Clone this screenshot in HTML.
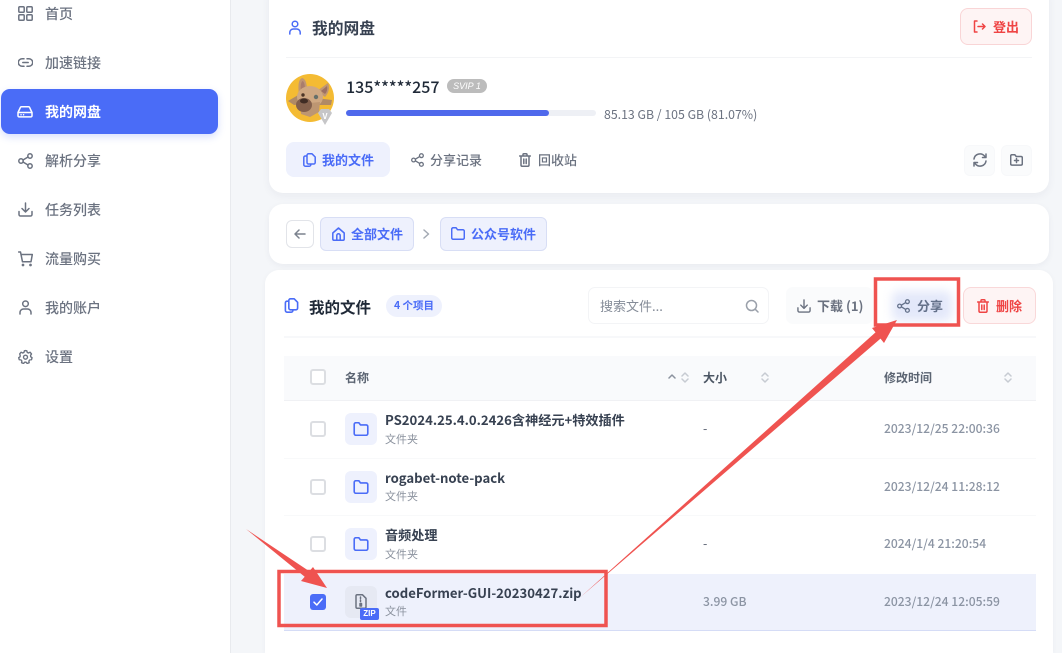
<!DOCTYPE html>
<html><head><meta charset="utf-8"><style>
*{box-sizing:border-box}
html,body{margin:0;padding:0;width:1062px;height:653px;overflow:hidden;background:#f4f6f9}
#root{position:absolute;left:0;top:0;width:1062px;height:653px;overflow:hidden;background:#f4f6f9;font-family:"Noto Sans CJK SC","Liberation Sans",sans-serif;color:#1f2937}
#in{position:absolute;left:0;top:0;width:1062px;height:653px;filter:blur(.35px)}
.a{position:absolute}
.t{position:absolute;white-space:nowrap;line-height:20px}
svg.i{position:absolute;fill:none;stroke:currentColor;stroke-width:1.5;stroke-linecap:round;stroke-linejoin:round}
.nav{position:absolute;left:45px;font-size:14px;color:#6b7280;white-space:nowrap;line-height:20px;font-weight:500}
.card{position:absolute;background:#fff;border-radius:14px}
.cb{position:absolute;left:310px;width:16px;height:16px;border:2px solid #dcdee2;border-radius:3px;background:#fff}
.fi{position:absolute;left:345px;width:32px;height:32px;border-radius:6px;background:#eef1fd;color:#4a6cf7}
.name{position:absolute;left:385px;font-size:13.15px;font-weight:700;color:#374151;white-space:nowrap;line-height:18px}
.sub{position:absolute;left:385px;font-size:11px;color:#8b929e;white-space:nowrap;line-height:16px}
.date{position:absolute;left:884px;font-size:12.1px;font-weight:500;color:#8b94a3;white-space:nowrap;line-height:18px}
.th{position:absolute;font-size:12px;font-weight:700;color:#5b6472;white-space:nowrap;line-height:18px}
</style></head><body>
<div id="root"><div id="in">

<!-- sidebar -->
<div class="a" style="left:0;top:0;width:231px;height:653px;background:#fff;border-right:1px solid #e8eaee"></div>
<div class="a" style="left:1px;top:89px;width:217px;height:45px;background:#4a6cf7;border-radius:9px;box-shadow:0 3px 8px rgba(74,108,247,.22)"></div>

<svg class="i" style="left:18px;top:6px;color:#6b7280" width="15" height="15" viewBox="0 0 15 15"><rect x=".8" y=".8" width="5.4" height="5.4" rx="1"/><rect x="8.8" y=".8" width="5.4" height="5.4" rx="1"/><rect x=".8" y="8.8" width="5.4" height="5.4" rx="1"/><rect x="8.8" y="8.8" width="5.4" height="5.4" rx="1"/></svg>
<div class="nav" style="top:4px">首页</div>
<svg class="i" style="left:18px;top:55px;color:#6b7280" width="15" height="15" viewBox="0 0 15 15"><path d="M6 3.8H4a3.7 3.7 0 0 0 0 7.4h2M9 3.8h2a3.7 3.7 0 0 1 0 7.4H9M4.8 7.5h5.4"/></svg>
<div class="nav" style="top:53px">加速链接</div>
<svg class="i" style="left:17px;top:104px;color:#fff" width="16" height="16" viewBox="0 0 16 16"><path d="M1 8.5 3.4 3.4a1.2 1.2 0 0 1 1-.6h7.2a1.2 1.2 0 0 1 1 .6L15 8.5v3.2a1.2 1.2 0 0 1-1.2 1.2H2.2a1.2 1.2 0 0 1-1.2-1.2zM1 8.500h14M4 10.800h.1M6.500 10.800h.1"/></svg>
<div class="nav" style="top:102px;color:#fff;font-weight:700">我的网盘</div>
<svg class="i" style="left:18px;top:153px;color:#6b7280" width="15" height="16" viewBox="0 0 15 16"><circle cx="3" cy="8" r="2.2"/><circle cx="12" cy="3" r="2.2"/><circle cx="12" cy="13" r="2.2"/><path d="M5 7 10 4M5 9l5 3"/></svg>
<div class="nav" style="top:151px">解析分享</div>
<svg class="i" style="left:18px;top:202px;color:#6b7280" width="15" height="15" viewBox="0 0 15 15"><path d="M1 9.500v3a1.500 1.500 0 0 0 1.500 1.500h10a1.500 1.500 0 0 0 1.500-1.500v-3M7.500 1v8.800M4 6.500l3.500 3.500L11 6.500"/></svg>
<div class="nav" style="top:200px">任务列表</div>
<svg class="i" style="left:18px;top:251px;color:#6b7280" width="15" height="16" viewBox="0 0 15 16"><path d="M.7 1h1.800l2 9.800h8.500L14.300 3.500H3"/><circle cx="5" cy="14" r=".6"/><circle cx="12.500" cy="14" r=".6"/></svg>
<div class="nav" style="top:249px">流量购买</div>
<svg class="i" style="left:19px;top:300px;color:#6b7280" width="13" height="15" viewBox="0 0 13 15"><circle cx="6.500" cy="3.800" r="2.800"/><path d="M1 14v-1.500A3.500 3.500 0 0 1 4.500 9h4a3.500 3.500 0 0 1 3.500 3.500V14"/></svg>
<div class="nav" style="top:298px">我的账户</div>
<svg class="i" style="left:18px;top:349px;color:#6b7280" width="15" height="15" viewBox="0 0 24 24"><path stroke-width="2.200" d="M12 2.500l2 .3.800 2.700 2 .9 2.500-1.300 2.300 2.800-1.500 2.300.2 2.200 2.200 1.500-.9 3.300-2.800.2-1.400 1.800.5 2.700-3.300 1.300-1.700-2.200h-2.200l-1.700 2.200-3.300-1.300.5-2.700-1.400-1.800-2.800-.2-.9-3.300 2.200-1.500.2-2.200L2.700 7.900 5 5.100l2.500 1.300 2-.9.800-2.700z"/><circle cx="12" cy="13" r="3.200" stroke-width="2.200"/></svg>
<div class="nav" style="top:347px">设置</div>

<!-- card 1 -->
<div class="card" style="left:269px;top:-20px;width:780px;height:213px;box-shadow:0 3px 9px rgba(30,40,70,.05)"></div>
<svg class="i" style="left:289px;top:20px;color:#4a6cf7" width="12" height="15" viewBox="0 0 12 15"><circle cx="6" cy="4" r="2.800"/><path d="M.8 14v-1.500A3.500 3.500 0 0 1 4.300 9h3.400a3.500 3.500 0 0 1 3.500 3.500V14"/></svg>
<div class="t" style="left:312px;top:18px;font-size:15.75px;font-weight:700;color:#374151">我的网盘</div>
<div class="a" style="left:286px;top:57px;width:746px;height:1px;background:#f3f4f6"></div>
<div class="a" style="left:960px;top:8px;width:72px;height:37px;background:#fef4f4;border:1px solid #f9d5d6;border-radius:8px"></div>
<svg class="i" style="left:973px;top:20px;color:#ef4444" width="13" height="13" viewBox="0 0 13 13" stroke-width="1.200"><path d="M4 1H1.500v11H4M5 6.500h7M9.500 4l2.500 2.500L9.500 9"/></svg>
<div class="t" style="left:993px;top:17px;font-size:13px;font-weight:700;color:#ef4444">登出</div>

<!-- avatar -->
<svg class="a" style="left:286px;top:74px" width="50" height="52" viewBox="0 0 50 52">
<circle cx="24" cy="24" r="24" fill="#f4bb33"/>
<path d="M2 27 14 20 20 30 8 31z" fill="#b08a66"/>
<path d="M30 24 46 26 45 31 32 31z" fill="#b08a66"/>
<path d="M13 21q-2-15 3-17 5 1 5 13z" fill="#c09673"/>
<path d="M15 18q-1-9 1.500-11 2.500 1 2.500 9z" fill="#a97d6c"/>
<path d="M31 17 42 9q3 7-3 14z" fill="#c09673"/>
<path d="M35 17 41 12q1 5-2 8z" fill="#9c7064"/>
<ellipse cx="24" cy="23" rx="13" ry="11" fill="#cfa882"/>
<path d="M14 30 34 28 33 38 24 43 15 40z" fill="#bd9672"/>
<ellipse cx="18" cy="31" rx="8" ry="7" fill="#83604c"/>
<ellipse cx="18" cy="27" rx="4" ry="2.500" fill="#3f2c24"/>
<circle cx="17" cy="21" r="1.700" fill="#4c3526"/><circle cx="30" cy="23" r="2.200" fill="#67706a"/>
<path d="M35 35h8l3 4-7 12-7-12z" fill="#c6c6c8"/>
<text x="39" y="45" font-size="8" font-weight="700" text-anchor="middle" fill="#fff" font-family="Noto Sans CJK SC,sans-serif">V</text>
</svg>
<div class="t" style="left:346px;top:76px;font-size:16px;font-weight:500;color:#1f2937">135*****257</div>
<div class="a" style="left:447px;top:79px;width:40px;height:14px;border-radius:7px;background:#bcbcbc;color:#fff;font:italic 9px/14px 'Liberation Sans',sans-serif;text-align:center">SVIP 1</div>
<div class="a" style="left:346px;top:110px;width:250px;height:6px;border-radius:3px;background:#eef0f5"></div>
<div class="a" style="left:346px;top:110px;width:203px;height:6px;border-radius:3px;background:#4f69ec"></div>
<div class="t" style="left:604px;top:104px;font-size:12.3px;color:#6b7280">85.13 GB / 105 GB (81.07%)</div>

<div class="a" style="left:286px;top:142px;width:104px;height:35px;border-radius:8px;background:#eef1fd"></div>
<svg class="i" style="left:303px;top:153px;color:#4a6cf7" width="13" height="14" viewBox="0 0 13 14" stroke-width="1.200"><path d="M4 3H2.300A1.500 1.500 0 0 0 .8 4.500v7.200A1.500 1.500 0 0 0 2.300 13.200h4A1.500 1.500 0 0 0 7.800 11.700V11M4 2.300A1.500 1.500 0 0 1 5.500.8H9L12.200 4v5.500A1.500 1.500 0 0 1 10.700 11H5.500A1.500 1.500 0 0 1 4 9.500z"/></svg>
<div class="t" style="left:322px;top:150px;font-size:13px;font-weight:700;color:#4a6cf7">我的文件</div>
<svg class="i" style="left:411px;top:153px;color:#6b7280" width="13" height="14" viewBox="0 0 15 16"><circle cx="3" cy="8" r="2.2"/><circle cx="12" cy="3" r="2.2"/><circle cx="12" cy="13" r="2.2"/><path d="M5 7 10 4M5 9l5 3"/></svg>
<div class="t" style="left:430px;top:150px;font-size:13px;font-weight:500;color:#6b7280">分享记录</div>
<svg class="i" style="left:519px;top:153px;color:#6b7280" width="12" height="14" viewBox="0 0 12 14" stroke-width="1.100"><path d="M.7 3h10.600M4 3V1.500A.8.8 0 0 1 4.800.8h2.400a.8.8 0 0 1 .8.700V3M2 3v9a1.300 1.300 0 0 0 1.300 1.300h5.400A1.300 1.300 0 0 0 10 12V3M4.800 6v4.500M7.200 6v4.500"/></svg>
<div class="t" style="left:538px;top:150px;font-size:13px;font-weight:500;color:#6b7280">回收站</div>

<div class="a" style="left:964px;top:145px;width:31px;height:31px;border-radius:6px;background:#fafbfc;border:1px solid #f7f8fa"></div>
<div class="a" style="left:1001px;top:145px;width:31px;height:31px;border-radius:6px;background:#fafbfc;border:1px solid #f7f8fa"></div>
<svg class="i" style="left:973px;top:153px;color:#6b7280" width="14" height="14" viewBox="0 0 14 14" stroke-width="1.100"><path d="M1 6A6 6 0 0 1 11.500 3L13 4.500M13 1v3.500H9.500M13 8A6 6 0 0 1 2.500 11L1 9.500M1 13V9.500h3.500"/></svg>
<svg class="i" style="left:1010px;top:154px;color:#6b7280" width="13" height="12" viewBox="0 0 13 12" stroke-width="1.100"><path d="M.7 2A1.300 1.300 0 0 1 2 .7h2.800l1.400 1.800h4.800A1.300 1.300 0 0 1 12.300 3.800v6A1.300 1.300 0 0 1 11 11.100H2A1.300 1.300 0 0 1 .7 9.800zM6.500 4.500v4M4.500 6.500h4"/></svg>

<!-- card 2 -->
<div class="card" style="left:269px;top:204px;width:780px;height:60px;box-shadow:0 2px 7px rgba(30,40,70,.05)"></div>
<div class="a" style="left:286px;top:220px;width:28px;height:28px;border-radius:6px;border:1px solid #e2e4e9;background:#fff"></div>
<svg class="i" style="left:294px;top:228px;color:#7b828e" width="12" height="12" viewBox="0 0 12 12" stroke-width="1.100"><path d="M11 6H1.200M5 2 1 6l4 4"/></svg>
<div class="a" style="left:320px;top:217px;width:94px;height:34px;border-radius:6px;background:#eef1fd;border:1px solid #d8def5"></div>
<svg class="i" style="left:332px;top:227px;color:#4a6cf7" width="13" height="14" viewBox="0 0 13 14" stroke-width="1.100"><path d="M.8 6 6.500 1l5.700 5v6a1.300 1.300 0 0 1-1.300 1.300H2.100A1.300 1.300 0 0 1 .8 12zM4.800 13V8.500a1.700 1.700 0 0 1 3.400 0V13"/></svg>
<div class="t" style="left:351px;top:224px;font-size:13px;font-weight:700;color:#4a6cf7">全部文件</div>
<svg class="i" style="left:423px;top:229px;color:#a3a9b3" width="7" height="10" viewBox="0 0 7 10" stroke-width="1.100"><path d="M1 1l4.500 4L1 9"/></svg>
<div class="a" style="left:440px;top:217px;width:107px;height:34px;border-radius:6px;background:#eef1fd;border:1px solid #d8def5"></div>
<svg class="i" style="left:451px;top:227px;color:#4a6cf7" width="14" height="13" viewBox="0 0 14 13" stroke-width="1.100"><path d="M.7 2.200A1.500 1.500 0 0 1 2.200.7h2.800L6.500 2.700h5.300a1.500 1.500 0 0 1 1.500 1.500v6.600a1.500 1.500 0 0 1-1.500 1.500H2.200a1.500 1.500 0 0 1-1.500-1.500z"/></svg>
<div class="t" style="left:471px;top:224px;font-size:13px;font-weight:700;color:#4a6cf7">公众号软件</div>

<!-- card 3 -->
<div class="card" style="left:265px;top:270px;width:788px;height:383px;border-radius:14px 14px 0 0;box-shadow:0 1px 6px rgba(30,40,70,.04)"></div>
<svg class="i" style="left:284px;top:298px;color:#4a6cf7" width="15" height="15" viewBox="0 0 13 14" stroke-width="1.100"><path d="M4 3H2.300A1.500 1.500 0 0 0 .8 4.500v7.200A1.500 1.500 0 0 0 2.300 13.200h4A1.500 1.500 0 0 0 7.800 11.700V11M4 2.300A1.500 1.500 0 0 1 5.500.8H9L12.200 4v5.500A1.500 1.500 0 0 1 10.700 11H5.500A1.500 1.500 0 0 1 4 9.500z"/></svg>
<div class="t" style="left:309px;top:297px;font-size:15.5px;font-weight:700;color:#1f2937">我的文件</div>
<div class="a" style="left:386px;top:295px;width:56px;height:22px;border-radius:11px;background:#eef1fd;color:#4a6cf7;font-size:10.5px;font-weight:700;line-height:22px;text-align:center">4 个项目</div>
<div class="a" style="left:588px;top:287px;width:181px;height:37px;border-radius:7px;border:1px solid #f3f4f6;background:#fff"></div>
<div class="t" style="left:600px;top:296px;font-size:13px;color:#858c98">搜索文件...</div>
<svg class="i" style="left:745px;top:299px;color:#9aa0aa" width="14" height="14" viewBox="0 0 14 14" stroke-width="1"><circle cx="6.500" cy="6.500" r="5"/><path d="M10.300 10.300 13 13"/></svg>
<div class="a" style="left:786px;top:287px;width:87px;height:37px;border-radius:7px;background:#fafbfc"></div>
<svg class="i" style="left:797px;top:299px;color:#6b7280" width="14" height="14" viewBox="0 0 15 15" stroke-width="1.200"><path d="M1 9.500v3a1.500 1.500 0 0 0 1.500 1.500h10a1.500 1.500 0 0 0 1.500-1.500v-3M7.500 1v8.800M4 6.500l3.500 3.500L11 6.500"/></svg>
<div class="t" style="left:817px;top:296px;font-size:13px;font-weight:700;color:#6b7280">下载 (1)</div>
<div class="a" style="left:892px;top:291px;width:60px;height:30px;border-radius:7px;background:#e3e8fa;filter:blur(5px)"></div>
<svg class="i" style="left:897px;top:299px;color:#64718a" width="13" height="14" viewBox="0 0 15 16"><circle cx="3" cy="8" r="2.2"/><circle cx="12" cy="3" r="2.2"/><circle cx="12" cy="13" r="2.2"/><path d="M5 7 10 4M5 9l5 3"/></svg>
<div class="t" style="left:917px;top:296px;font-size:13px;font-weight:700;color:#64718a">分享</div>
<div class="a" style="left:963px;top:287px;width:73px;height:37px;border-radius:8px;background:#fef4f4;border:1px solid #f9d8d9"></div>
<svg class="i" style="left:977px;top:299px;color:#ef4444" width="12" height="14" viewBox="0 0 12 14" stroke-width="1.100"><path d="M.7 3h10.600M4 3V1.500A.8.8 0 0 1 4.800.8h2.400a.8.8 0 0 1 .8.700V3M2 3v9a1.300 1.300 0 0 0 1.300 1.300h5.400A1.300 1.300 0 0 0 10 12V3M4.800 6v4.500M7.200 6v4.500"/></svg>
<div class="t" style="left:996px;top:296px;font-size:13px;font-weight:700;color:#ef4444">删除</div>
<div class="a" style="left:284px;top:336px;width:752px;height:2px;background:#f7f8fa"></div>

<!-- table -->
<div class="a" style="left:284px;top:356px;width:752px;height:45px;background:#f9fafc;border-bottom:1px solid #f0f1f4"></div>
<div class="cb" style="top:369px"></div>
<div class="th" style="left:345px;top:369px">名称</div>
<div class="th" style="left:703px;top:369px;color:#4b5563">大小</div>
<div class="th" style="left:884px;top:369px">修改时间</div>
<svg class="i" style="left:668px;top:373px;color:#8b929e" width="8" height="6" viewBox="0 0 8 6" stroke-width="1"><path d="M1 5l3-3 3 3"/></svg>
<svg class="i" style="left:681px;top:372px;color:#c7cbd2" width="8" height="11" viewBox="0 0 8 11" stroke-width="1"><path d="M1 4l3-3 3 3M1 7l3 3 3-3"/></svg>
<svg class="i" style="left:761px;top:372px;color:#c7cbd2" width="8" height="11" viewBox="0 0 8 11" stroke-width="1"><path d="M1 4l3-3 3 3M1 7l3 3 3-3"/></svg>
<svg class="i" style="left:1004px;top:372px;color:#c7cbd2" width="8" height="11" viewBox="0 0 8 11" stroke-width="1"><path d="M1 4l3-3 3 3M1 7l3 3 3-3"/></svg>

<!-- rows -->
<div class="cb" style="top:421px"></div>
<div class="fi" style="top:413px"></div>
<svg class="i" style="left:353px;top:422px;color:#4a6cf7" width="16" height="14" viewBox="0 0 14 13" stroke-width="1.100"><path d="M.7 2.200A1.500 1.500 0 0 1 2.200.7h2.800L6.500 2.700h5.300a1.500 1.500 0 0 1 1.500 1.500v6.600a1.500 1.500 0 0 1-1.500 1.500H2.200a1.500 1.500 0 0 1-1.500-1.500z"/></svg>
<div class="name" style="top:411px">PS2024.25.4.0.2426含神经元+特效插件</div>
<div class="sub" style="top:431px">文件夹</div>
<div class="date" style="left:703px;top:420px;color:#6b7280">-</div>
<div class="date" style="top:420px">2023/12/25 22:00:36</div>
<div class="a" style="left:284px;top:458px;width:752px;height:1px;background:#f8f9fa"></div>

<div class="cb" style="top:479px"></div>
<div class="fi" style="top:471px"></div>
<svg class="i" style="left:353px;top:480px;color:#4a6cf7" width="16" height="14" viewBox="0 0 14 13" stroke-width="1.100"><path d="M.7 2.200A1.500 1.500 0 0 1 2.200.7h2.800L6.500 2.700h5.300a1.500 1.500 0 0 1 1.500 1.500v6.600a1.500 1.500 0 0 1-1.500 1.500H2.200a1.500 1.500 0 0 1-1.500-1.500z"/></svg>
<div class="name" style="top:469px">rogabet-note-pack</div>
<div class="sub" style="top:488px">文件夹</div>
<div class="date" style="left:703px;top:478px;color:#6b7280">-</div>
<div class="date" style="top:478px">2023/12/24 11:28:12</div>
<div class="a" style="left:284px;top:515px;width:752px;height:1px;background:#f8f9fa"></div>

<div class="cb" style="top:536px"></div>
<div class="fi" style="top:528px"></div>
<svg class="i" style="left:353px;top:537px;color:#4a6cf7" width="16" height="14" viewBox="0 0 14 13" stroke-width="1.100"><path d="M.7 2.200A1.500 1.500 0 0 1 2.200.7h2.800L6.500 2.700h5.300a1.500 1.500 0 0 1 1.500 1.500v6.600a1.500 1.500 0 0 1-1.500 1.500H2.200a1.500 1.500 0 0 1-1.500-1.500z"/></svg>
<div class="name" style="top:526px">音频处理</div>
<div class="sub" style="top:546px">文件夹</div>
<div class="date" style="left:703px;top:535px;color:#6b7280">-</div>
<div class="date" style="top:535px">2024/1/4 21:20:54</div>

<div class="a" style="left:284px;top:574px;width:752px;height:57px;background:#eef1fc;border-bottom:1.5px solid #d5dcf6"></div>
<div class="a" style="left:310px;top:594px;width:16px;height:16px;border-radius:3px;background:#4a6cf7"></div>
<svg class="i" style="left:312px;top:596px;color:#fff" width="12" height="12" viewBox="0 0 12 12" stroke-width="2"><path d="M2 6.200 4.800 9 10 3"/></svg>
<div class="a" style="left:345px;top:586px;width:32px;height:32px;border-radius:6px;background:#e6e9f3"></div>
<svg class="i" style="left:355px;top:594px;color:#6b7280" width="12" height="15" viewBox="0 0 12 15" stroke-width="1"><path d="M1 2A1.200 1.200 0 0 1 2.200.8H7.500L11 4.300V13a1.200 1.200 0 0 1-1.200 1.200H2.200A1.200 1.200 0 0 1 1 13zM5.500 3v1.500M5.500 6v1.500M5 9.500h1.500V12H5z"/></svg>
<div class="a" style="left:360px;top:608px;width:19px;height:12px;border-radius:2px;background:#4a6cf7;color:#fff;font-size:8px;font-weight:700;line-height:12px;text-align:center;font-family:'Liberation Sans',sans-serif">ZIP</div>
<div class="name" style="top:584px">codeFormer-GUI-20230427.zip</div>
<div class="sub" style="top:603px">文件</div>
<div class="date" style="left:703px;top:593px;color:#8b94a3">3.99 GB</div>
<div class="date" style="top:593px">2023/12/24 12:05:59</div>

<!-- annotations -->
<svg class="a" style="left:0;top:0" width="1062" height="653" viewBox="0 0 1062 653">
<rect x="875.500" y="279" width="83" height="46" fill="none" stroke="#ef5350" stroke-width="3.500"/>
<rect x="279" y="571.500" width="327" height="54" fill="none" stroke="#ef5350" stroke-width="3.500"/>
<path d="M246 529 304.700 576.700 301 581 327 588 313 567 309.300 571.300z" fill="#ef5350"/>
<path d="M580 597.500 875.500 332.400 872 328 897 320 884 343 880.500 338.600z" fill="#ef5350"/>
</svg>
</div></div>
</body></html>
